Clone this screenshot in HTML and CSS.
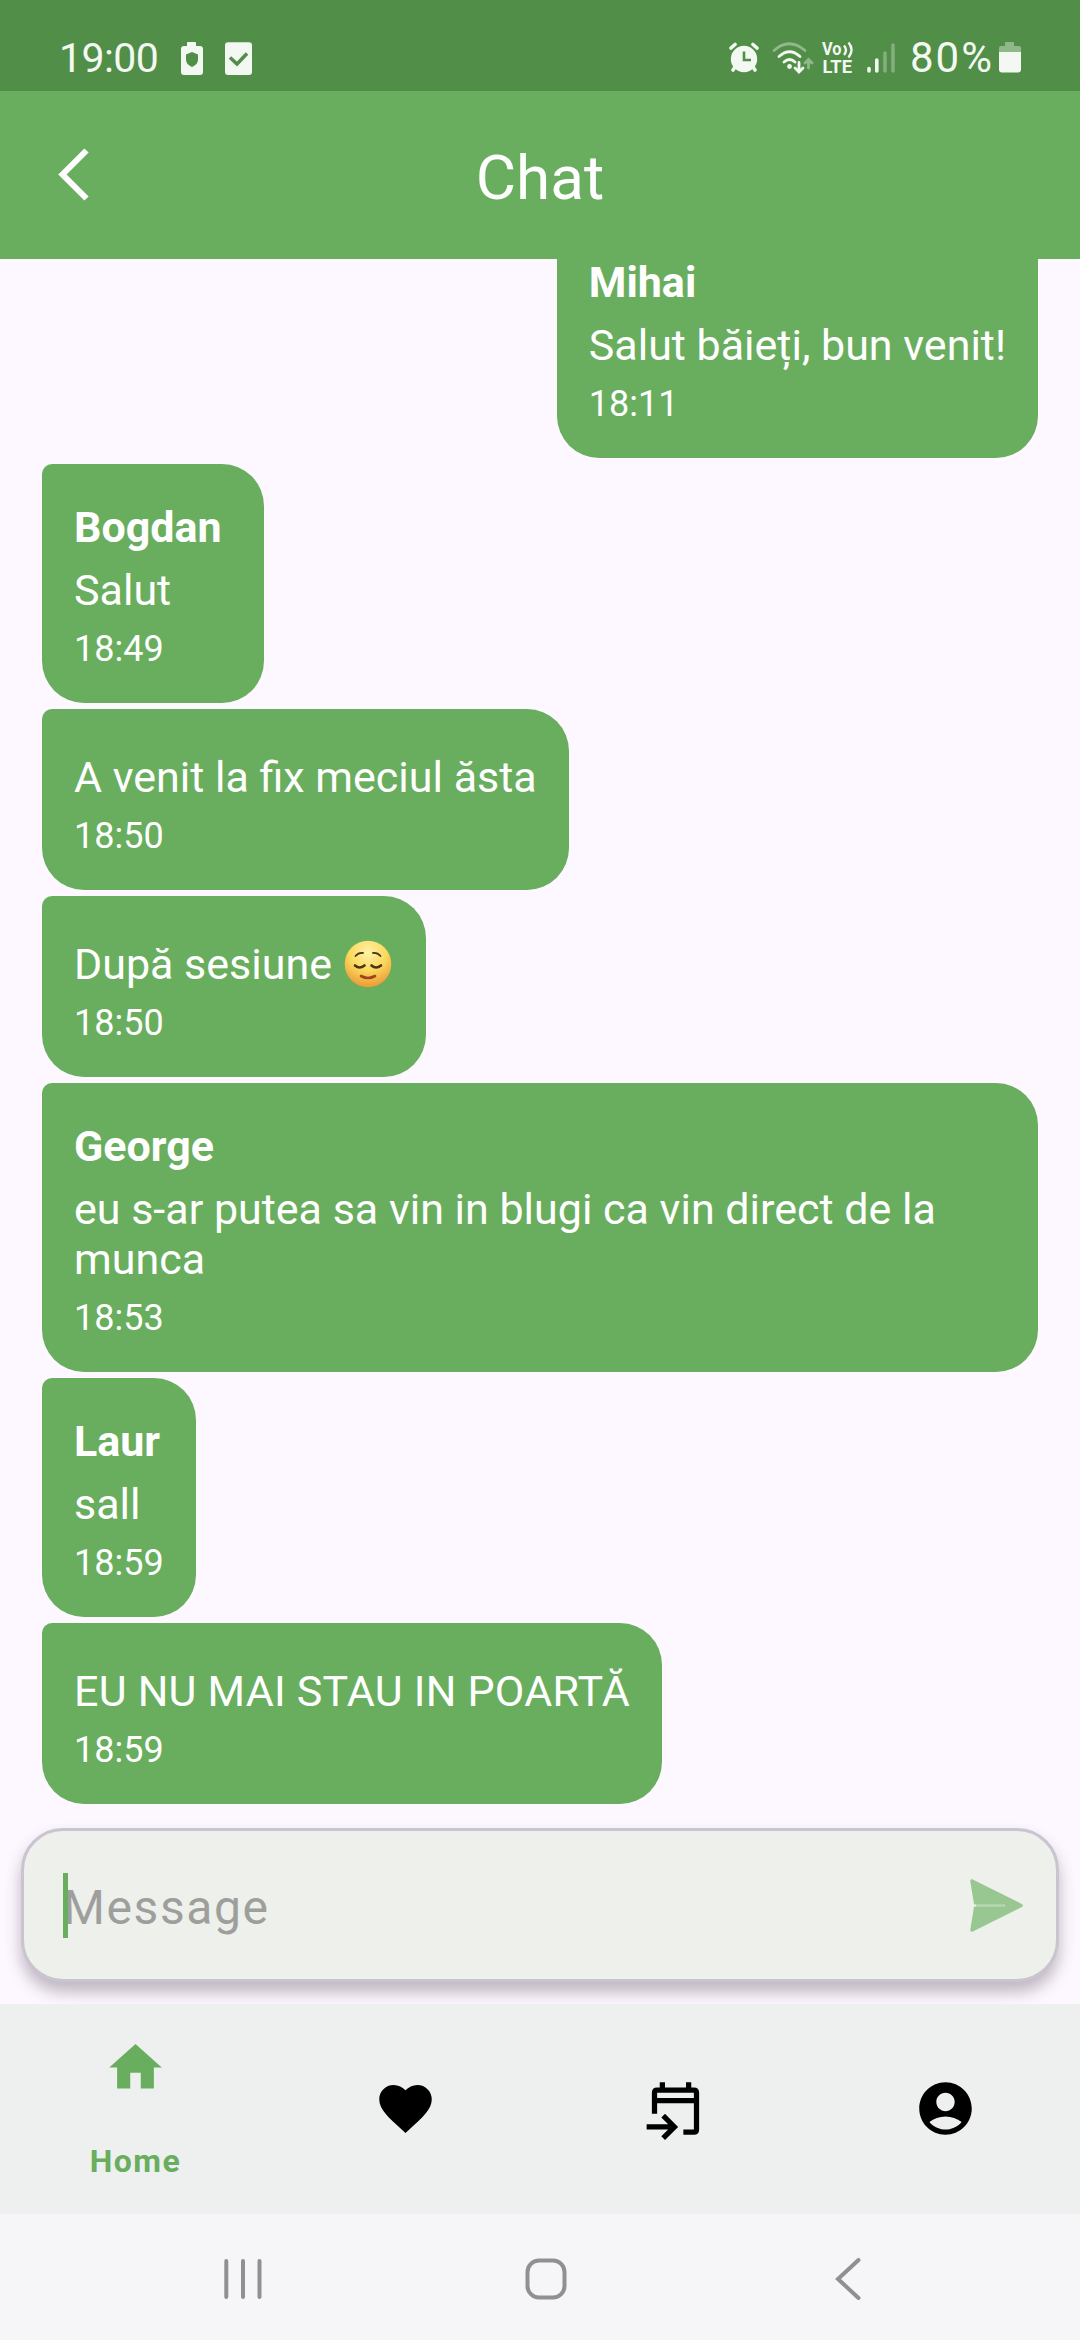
FILE: index.html
```
<!DOCTYPE html>
<html lang="ro">
<head>
<meta charset="utf-8">
<title>Chat</title>
<link rel="stylesheet" href="styles.css">
</head>
<body>
<div class="phone">
  <div class="status">
    <span class="clock">19:00</span>
    <svg class="s-shield" width="22" height="34" viewBox="0 0 22 34"><path fill="#f3f8f2" fill-rule="evenodd" d="M6 1q0-1 1-1h7q1 0 1 1v3h4q3 0 3 3v23q0 3-3 3H3q-3 0-3-3V7q0-3 3-3h3zM11 10l-6 2.500v5q0 5 6 7.500 6-2.500 6-7.500v-5z"/></svg>
    <svg class="s-check" width="27" height="34" viewBox="0 0 27 34"><rect y="0.300" width="27" height="32.700" rx="3" fill="#f3f8f2"/><path d="M5 15.500l7 6.500L22 11.500" fill="none" stroke="#518e47" stroke-width="3.500"/></svg>
    <svg class="s-alarm" width="30" height="31" viewBox="0 0 30 31"><g fill="none" stroke="#f3f8f2" stroke-width="3.600" stroke-linecap="round"><path d="M2 6l4-3.500M28 6l-4-3.500M6 25l-2 3M24 25l2 3"/></g><circle cx="15" cy="17" r="13.200" fill="#f3f8f2"/><path d="M15 9.500V18h7" fill="none" stroke="#518e47" stroke-width="2.600"/></svg>
    <svg class="s-wifi" width="42" height="32" viewBox="0 0 42 32"><g fill="none" stroke-width="2.800" stroke-linecap="round"><path d="M2 8.500Q17-5 33 8.500" stroke="#91b98b"/><g stroke="#f3f8f2"><path d="M7 14.500q10.500-9.500 21 0M12 20q5.500-5 11 0M27 20.500v9M23 26l4 4 4-4"/></g><path d="M36.500 26V18M33 21l3.500-3.500L40 21" stroke="#91b98b"/></g><circle cx="17.500" cy="24.500" r="2.400" fill="#f3f8f2"/></svg>
    <svg class="s-volte" width="33" height="34" viewBox="0 0 33 34"><text class="volte" x="0" y="14" textLength="19.500" lengthAdjust="spacingAndGlyphs">Vo</text><text class="volte" x="0.500" y="32" textLength="29.500" lengthAdjust="spacingAndGlyphs">LTE</text><path d="M22 4.500q4 4.500 0 9.500M26.500 1.500q6 7 0 15" fill="none" stroke="#f3f8f2" stroke-width="2.400"/></svg>
    <svg class="s-signal" width="28" height="30" viewBox="0 0 28 30"><g stroke-width="3.600" stroke-linecap="round"><path d="M2 25.500v2.500M9.800 17v11" stroke="#f3f8f2"/><path d="M18 10v18M26 2v26" stroke="#84ae7d"/></g></svg>
    <span class="percent">80%</span>
    <svg class="s-batt" width="22" height="31" viewBox="0 0 22 31"><path fill="#8fb88a" d="M0 11V6q0-2 2-2h4V1q0-1 1-1h7q1 0 1 1v3h5q2 0 2 2v5z"/><path fill="#f3f8f2" d="M0 10h22v17.500q0 3-3 3H3q-3 0-3-3z"/></svg>
  </div>
  <header class="bar">
    <svg class="back" width="32" height="54" viewBox="0 0 32 54"><path d="M28.500 2.500L4.500 26.500l24 24" fill="none" stroke="#fff" stroke-width="6"/></svg>
    <h1 class="title">Chat</h1>
  </header>
  <main class="list">
    <div class="bubble mine"><div class="name">Mihai</div><div class="text">Salut băieți, bun venit!</div><div class="time">18:11</div></div>
    <div class="bubble short"><div class="name">Bogdan</div><div class="text">Salut</div><div class="time">18:49</div></div>
    <div class="bubble cont"><div class="text">A venit la fix meciul ăsta</div><div class="time">18:50</div></div>
    <div class="bubble cont"><div class="text with-face">După sesiune
      <svg class="face" width="48" height="48" viewBox="0 0 48 48"><defs><radialGradient id="skin" cx=".5" cy=".25" r=".8"><stop offset="0" stop-color="#fff3a6"/><stop offset=".5" stop-color="#fbd85c"/><stop offset="1" stop-color="#e8922f"/></radialGradient></defs><circle cx="24" cy="24" r="23.300" fill="url(#skin)"/><g fill="none" stroke="#4c3218" stroke-linecap="round"><path d="M11.500 16q3-3.500 7.500-3M36.500 16q-3-3.500-7.500-3" stroke-width="1.800"/><path d="M11 25.500q4.500 4 9.500 0M27.500 25.500q4.500 4 9.500 0" stroke-width="2.600"/><path d="M17 36q7 4 14 0" stroke="#a0441d" stroke-width="2.600"/></g></svg>
    </div><div class="time">18:50</div></div>
    <div class="bubble"><div class="name">George</div><div class="text">eu s-ar putea sa vin in blugi ca vin direct de la munca</div><div class="time">18:53</div></div>
    <div class="bubble"><div class="name">Laur</div><div class="text">sall</div><div class="time">18:59</div></div>
    <div class="bubble cont"><div class="text caps">EU NU MAI STAU IN POARTĂ</div><div class="time">18:59</div></div>
  </main>
  <div class="composer">
    <div class="field">
      <span class="caret"></span><span class="hint">Message</span>
      <svg class="send" width="53" height="53" viewBox="0 0 53 53"><path d="M2 2L51 26.500 2 51 6 26.500z" fill="#98c792" stroke="#98c792" stroke-width="3.500" stroke-linejoin="round"/><path d="M5 26.500h30" stroke="#b5d6b0" stroke-width="2.500"/><path d="M2 26.500h4" stroke="#edf0eb" stroke-width="2"/></svg>
    </div>
  </div>
  <nav class="tabs">
    <div class="tab active"><svg width="63" height="63" viewBox="0 0 24 24"><path d="M10 20v-6h4v6h5v-8h3L12 3 2 12h3v8z"/></svg><span class="label">Home</span></div>
    <div class="tab"><svg width="63" height="63" viewBox="0 0 24 24"><path d="M12 21.350l-1.450-1.320C5.400 15.360 2 12.280 2 8.500 2 5.420 4.420 3 7.500 3c1.740 0 3.410.81 4.500 2.090C13.090 3.810 14.760 3 16.500 3 19.580 3 22 5.420 22 8.500c0 3.780-3.400 6.860-8.550 11.540z"/></svg></div>
    <div class="tab"><svg width="63" height="63" viewBox="0 0 24 24"><path fill-rule="evenodd" d="M3 14V6q0-2 2-2h1V2h2v2h8V2h2v2h1q2 0 2 2v14q0 2-2 2h-4v-2h4V10H5v4zM5 8h14V6H5z"/><path d="M8 24l-1.400-1.400L9.200 20H1v-2h8.200l-2.600-2.600L8 14l5 5z"/></svg></div>
    <div class="tab"><svg width="63" height="63" viewBox="0 0 24 24"><path d="M12 2C6.480 2 2 6.480 2 12s4.480 10 10 10 10-4.480 10-10S17.520 2 12 2zm0 4c1.930 0 3.500 1.570 3.500 3.500S13.930 13 12 13s-3.500-1.570-3.500-3.500S10.070 6 12 6zm0 14c-2.030 0-4.430-.82-6.140-2.880C7.550 15.800 9.680 15 12 15s4.450.8 6.140 2.120C16.430 19.180 14.030 20 12 20z"/></svg></div>
  </nav>
  <div class="system">
    <svg width="40" height="42" viewBox="0 0 40 42"><path d="M3.300 3v36M20 3v36M36.500 3v36" stroke="#909090" stroke-width="4" stroke-linecap="round"/></svg>
    <svg class="sys-home" width="42" height="42" viewBox="0 0 42 42"><rect x="2.500" y="2.500" width="37" height="37" rx="11.500" fill="none" stroke="#909090" stroke-width="4"/></svg>
    <svg width="26" height="42" viewBox="0 0 26 42"><path d="M23.500 2L3 21l20.500 19" fill="none" stroke="#909090" stroke-width="4" stroke-linecap="round"/></svg>
  </div>
</div>
</body>
</html>
```
FILE: styles.css
```
* { box-sizing: border-box; }
body { margin: 0; font-family: Roboto, "Noto Sans", sans-serif; }
svg { display: block; flex: none; }
.phone { width: 1080px; height: 2340px; display: flex; flex-direction: column; background: #fdf8ff; overflow: hidden; }

.status { flex: none; height: 91px; padding: 42px 59px 0 59px; display: flex; align-items: flex-start; background: #518e47; color: #f3f8f2; }
.clock, .percent { font-size: 41px; line-height: 48px; height: 31px; margin-top: -8px; white-space: nowrap; }
.clock { width: 122px; letter-spacing: -0.6px; }
.s-check { margin-left: 22px; }
.s-alarm { margin-left: auto; }
.s-wifi { margin-left: 13px; }
.s-volte { margin-left: 8px; margin-top: -1px; overflow: visible; }
.volte { font-size: 17.500px; font-weight: 700; fill: #f3f8f2; }
.s-signal { margin-left: 12px; margin-top: 1px; }
.percent { margin-left: 15px; width: 89px; font-size: 42px; letter-spacing: 2px; }

.bar { flex: none; height: 168px; display: flex; align-items: center; padding: 0 58px; background: #69ae5e; }
.back { margin-top: -1px; }
.title { flex: 1; margin: 6px 32px 0 0; text-align: center; font-size: 62px; line-height: 76px; font-weight: 400; color: #fff; }

.list { flex: none; height: 1569px; padding: 0 42px 24px; display: flex; flex-direction: column; justify-content: flex-end; align-items: flex-start; gap: 6px; overflow: hidden; }
.bubble { flex: none; max-width: 996px; padding: 38px 32px 32px; background: #69ae5e; color: #fff; border-radius: 10px 42px 42px 42px; }
.mine { align-self: flex-end; border-radius: 42px 10px 42px 42px; }
.short { min-width: 222px; }
.cont { padding-top: 43px; }
.name, .text { font-size: 43px; line-height: 50px; }
.name { font-weight: 700; margin-bottom: 13px; }
.caps { letter-spacing: 0.230px; }
.time { font-size: 36px; line-height: 43px; margin-top: 13px; }
.with-face { display: flex; align-items: center; gap: 12px; }
.face { margin-right: 2px; }

.composer { flex: none; height: 176px; padding: 0 21px; clip-path: inset(-30px 0 0 0); }
.field { height: 154px; display: flex; align-items: center; padding: 0 33px 0 39px; border: 3px solid #c9c4cf; border-radius: 42px; background: #edf0eb; box-shadow: 0 10px 16px rgba(60, 40, 60, .32); }
.caret { width: 5px; height: 65px; margin-right: -5px; background: #69ae5e; z-index: 1; }
.hint { flex: 1; font-size: 48px; line-height: 56px; letter-spacing: 1.600px; color: #9e9f9d; padding-top: 6px; }

.tabs { flex: none; height: 210px; display: grid; grid-template-columns: repeat(4, 270px); background: #edf0ee; }
.tab { display: flex; flex-direction: column; align-items: center; justify-content: center; padding-bottom: 1px; }
.tab.active { justify-content: flex-start; padding-top: 32px; fill: #69ae5e; color: #69ae5e; }
.label { margin-top: 44px; padding-left: 1px; font-size: 32px; line-height: 36px; font-weight: 700; letter-spacing: 1.500px; }

.system { flex: 1; display: flex; align-items: flex-start; padding: 44px 219px 0 223px; justify-content: space-between; background: #f6f6f8; }
.sys-home { margin-right: 7px; }
```
